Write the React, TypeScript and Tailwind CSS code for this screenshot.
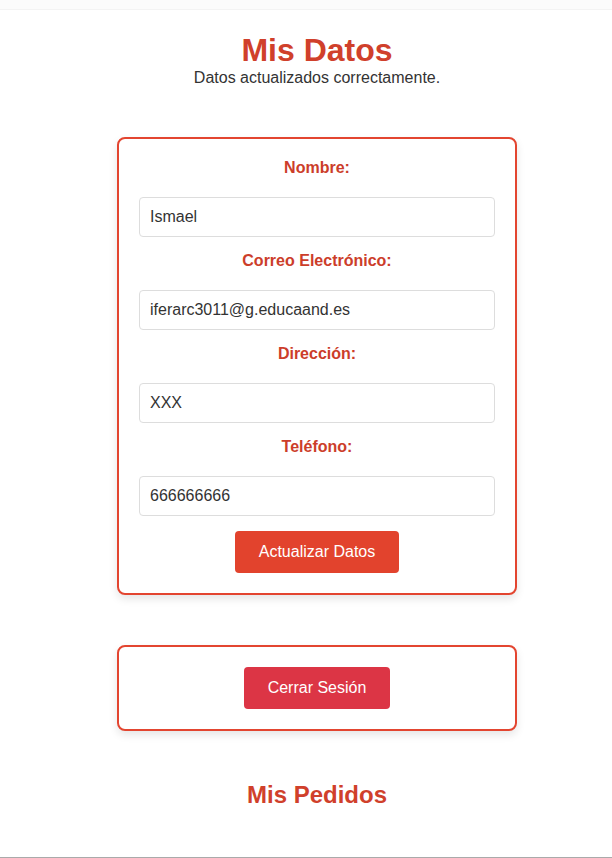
export default function App() {
  const fields = [
    { label: "Nombre:", value: "Ismael" },
    { label: "Correo Electrónico:", value: "iferarc3011@g.educaand.es" },
    { label: "Dirección:", value: "XXX" },
    { label: "Teléfono:", value: "666666666" },
  ];

  return (
    <div className="min-h-screen bg-white font-['Liberation_Sans',Arial,sans-serif] text-[#333]">
      <div className="h-[10px] bg-[#fbfbfb] border-b border-[#f3f3f3]" />

      <main className="flex flex-col items-center pl-[22px]">
        <h1 className="mt-[22px] text-[32px] leading-[37px] font-bold text-[#d0402b]">Mis Datos</h1>
        <p className="text-base leading-[18px] text-[#333]">Datos actualizados correctamente.</p>

        <form className="mt-[50px] w-[400px] border-2 border-[#e34530] rounded-lg bg-white shadow-[0_4px_8px_rgba(0,0,0,0.1)] p-5 flex flex-col">
          {fields.map((f, i) => (
            <div key={f.label} className="flex flex-col">
              <label className={`text-center text-base leading-[18px] font-bold text-[#cc3d2a] ${i > 0 ? "mt-[15px]" : ""}`}>
                {f.label}
              </label>
              <input
                defaultValue={f.value}
                className="mt-5 h-10 w-full rounded border border-[#ddd] px-[10px] text-base text-[#333] outline-none"
              />
            </div>
          ))}
          <button
            type="button"
            className="mt-[15px] self-center rounded bg-[#e2432d] px-6 py-3 text-base leading-[18px] text-white"
          >
            Actualizar Datos
          </button>
        </form>

        <div className="mt-[50px] w-[400px] border-2 border-[#e34530] rounded-lg bg-white shadow-[0_4px_8px_rgba(0,0,0,0.1)] p-5 flex justify-center">
          <button type="button" className="rounded bg-[#dc3545] px-6 py-3 text-base leading-[18px] text-white">
            Cerrar Sesión
          </button>
        </div>

        <h2 className="mt-[50px] text-2xl leading-[28px] font-bold text-[#d0402b]">Mis Pedidos</h2>
      </main>

      <div className="mt-[48px] border-t border-[#aaa]" />
    </div>
  );
}
